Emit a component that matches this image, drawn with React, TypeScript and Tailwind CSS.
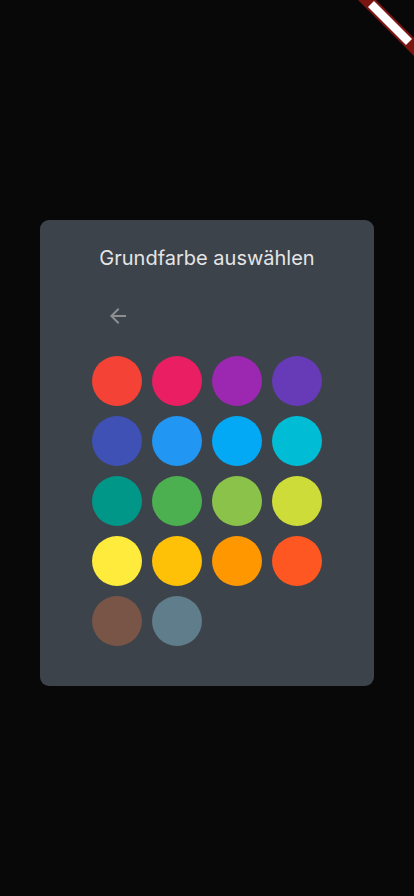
const colors = [
  "#F44336", "#E91E63", "#9C27B0", "#673AB7",
  "#3F51B5", "#2196F3", "#03A9F4", "#00BCD4",
  "#009688", "#4CAF50", "#8BC34A", "#CDDC39",
  "#FFEB3B", "#FFC107", "#FF9800", "#FF5722",
  "#795548", "#607D8B",
];

export default function App() {
  return (
    <div className="relative h-[896px] w-[414px] overflow-hidden bg-[#080808] pt-[220px] flex justify-center font-['Inter',sans-serif]">
      <div className="w-[334px] h-[466px] rounded-[9px] bg-[#3d434a] pt-[26px] pb-[40px] flex flex-col">
        <h1 className="h-[24px] text-center text-[20px] leading-[24px] font-normal text-[#e4e5e6]">
          Grundfarbe auswählen
        </h1>
        <div className="mt-[26px] pl-[58px]">
          <button className="w-[40px] h-[40px] flex items-center justify-center">
            <svg width="24" height="24" viewBox="0 0 24 24" fill="#8d8f92">
              <path d="M20 11H7.83l5.59-5.59L12 4l-8 8 8 8 1.41-1.41L7.83 13H20v-2z" />
            </svg>
          </button>
        </div>
        <div className="mt-[20px] mx-auto grid grid-cols-4 gap-[10px] w-[230px]">
          {colors.map((c) => (
            <div key={c} className="w-[50px] h-[50px] rounded-full" style={{ backgroundColor: c }} />
          ))}
        </div>
      </div>
      <svg className="absolute top-0 right-0" width="60" height="60" viewBox="0 0 60 60">
        <polygon points="4,0 22,0 60,38 60,56" fill="#7a1512" />
        <polygon points="14,7 20,1 58,39 52,45" fill="#ffffff" />
      </svg>
    </div>
  );
}
